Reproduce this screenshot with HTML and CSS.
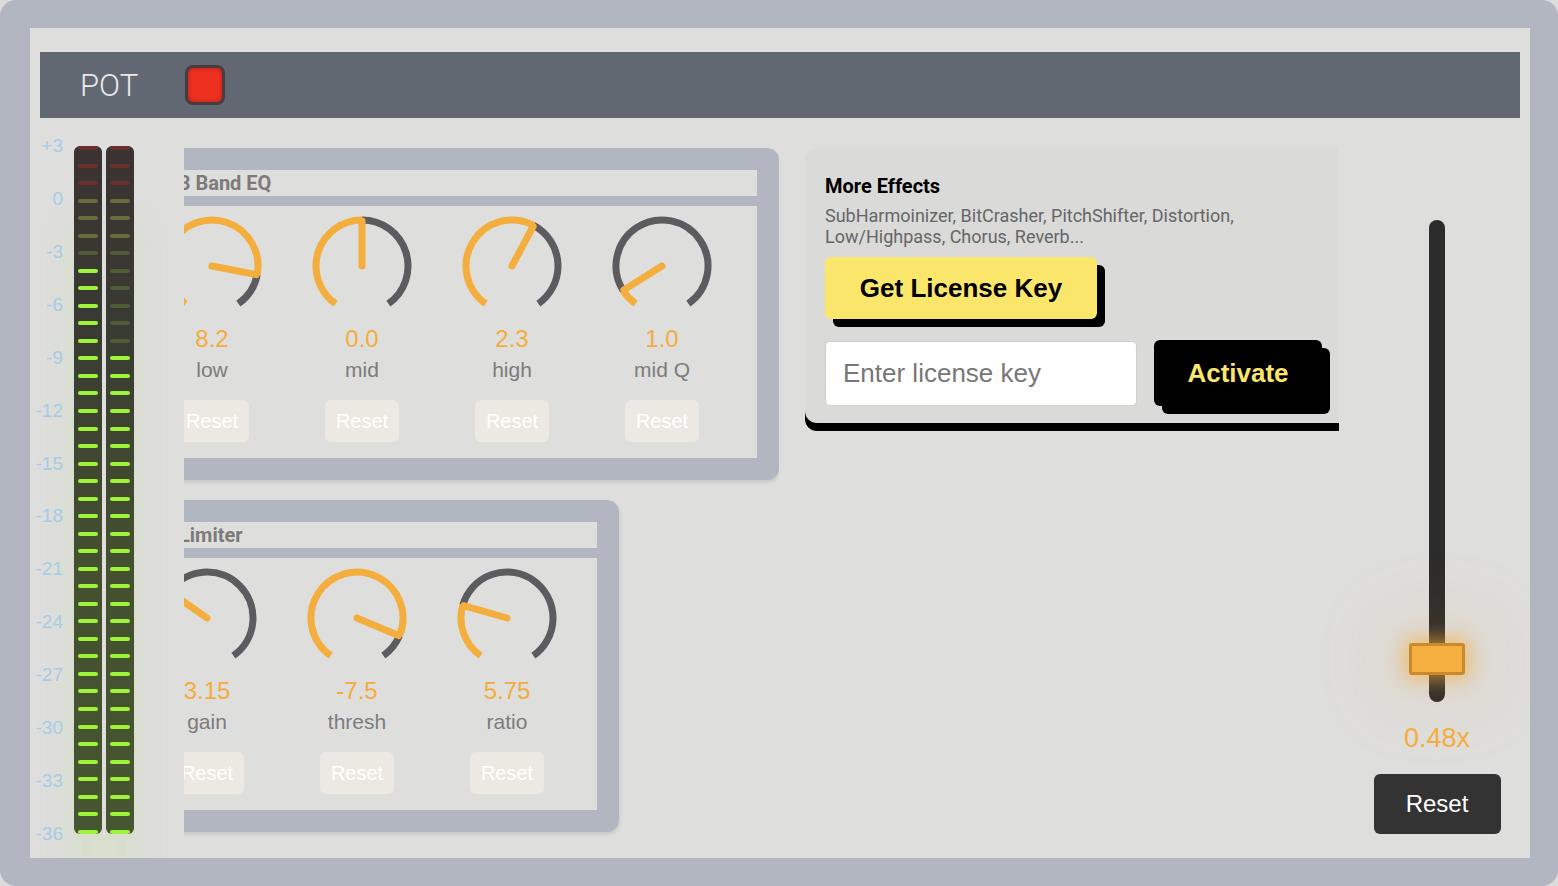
FILE: index.html
```html
<!DOCTYPE html>
<html>
<head>
    <link rel="stylesheet" href="styles.css">
</head>
<body>
    <div class="frame">
        <div class="inner">
            <div class="header">
                <span class="title">POT</span>
                <div class="led"></div>
            </div>

            <div class="main">
                <!-- level meter -->
                <div class="meter">
                    <div class="scale">
                        <span>+3</span><span>0</span><span>-3</span><span>-6</span><span>-9</span><span>-12</span><span>-15</span>
                        <span>-18</span><span>-21</span><span>-24</span><span>-27</span><span>-30</span><span>-33</span><span>-36</span>
                    </div>
                    <div class="bars">
                        <div class="bar">
                            <i class="r"></i><i class="r"></i><i class="r"></i>
                            <i class="y"></i><i class="y"></i><i class="y"></i>
                            <i class="g"></i>
                            <i class="on"></i><i class="on"></i><i class="on"></i><i class="on"></i><i class="on"></i>
                            <i class="on"></i><i class="on"></i><i class="on"></i><i class="on"></i><i class="on"></i>
                            <i class="on"></i><i class="on"></i><i class="on"></i><i class="on"></i><i class="on"></i>
                            <i class="on"></i><i class="on"></i><i class="on"></i><i class="on"></i><i class="on"></i>
                            <i class="on"></i><i class="on"></i><i class="on"></i><i class="on"></i><i class="on"></i>
                            <i class="on"></i><i class="on"></i><i class="on"></i><i class="on"></i><i class="on"></i>
                            <i class="on"></i><i class="on"></i><i class="on"></i>
                        </div>
                        <div class="bar">
                            <i class="r"></i><i class="r"></i><i class="r"></i>
                            <i class="y"></i><i class="y"></i><i class="y"></i>
                            <i class="g"></i><i class="g"></i><i class="g"></i><i class="g"></i><i class="g"></i><i class="g"></i>
                            <i class="on"></i><i class="on"></i><i class="on"></i><i class="on"></i><i class="on"></i>
                            <i class="on"></i><i class="on"></i><i class="on"></i><i class="on"></i><i class="on"></i>
                            <i class="on"></i><i class="on"></i><i class="on"></i><i class="on"></i><i class="on"></i>
                            <i class="on"></i><i class="on"></i><i class="on"></i><i class="on"></i><i class="on"></i>
                            <i class="on"></i><i class="on"></i><i class="on"></i><i class="on"></i><i class="on"></i>
                            <i class="on"></i><i class="on"></i><i class="on"></i>
                        </div>
                    </div>
                </div>

                <!-- effect racks -->
                <div class="racks">
                    <div class="panel eq">
                        <div class="panel-title">3 Band EQ</div>
                        <div class="panel-body">
                            <div class="knob-col">
                                <svg class="knob" viewBox="0 0 100 100" width="100" height="100">
                                    <path class="track" d="M95.16 58.78 A46 46 0 0 1 76.38 87.68"/>
                                    <path class="fill" d="M23.62 87.68 A46 46 0 1 1 95.16 58.78"/>
                                    <line class="needle" x1="50" y1="50" x2="94.17" y2="58.59"/>
                                </svg>
                                <div class="value">8.2</div>
                                <div class="label">low</div>
                                <button class="reset">Reset</button>
                            </div>
                            <div class="knob-col">
                                <svg class="knob" viewBox="0 0 100 100" width="100" height="100">
                                    <path class="track" d="M50 4 A46 46 0 0 1 76.38 87.68"/>
                                    <path class="fill" d="M23.62 87.68 A46 46 0 0 1 50 4"/>
                                    <line class="needle" x1="50" y1="50" x2="50" y2="5"/>
                                </svg>
                                <div class="value">0.0</div>
                                <div class="label">mid</div>
                                <button class="reset">Reset</button>
                            </div>
                            <div class="knob-col">
                                <svg class="knob" viewBox="0 0 100 100" width="100" height="100">
                                    <path class="track" d="M71.60 9.39 A46 46 0 0 1 76.38 87.68"/>
                                    <path class="fill" d="M23.62 87.68 A46 46 0 0 1 71.60 9.39"/>
                                    <line class="needle" x1="50" y1="50" x2="71.13" y2="10.27"/>
                                </svg>
                                <div class="value">2.3</div>
                                <div class="label">high</div>
                                <button class="reset">Reset</button>
                            </div>
                            <div class="knob-col">
                                <svg class="knob" viewBox="0 0 100 100" width="100" height="100">
                                    <path class="track" d="M10.99 74.38 A46 46 0 1 1 76.38 87.68"/>
                                    <path class="fill" d="M23.62 87.68 A46 46 0 0 1 10.99 74.38"/>
                                    <line class="needle" x1="50" y1="50" x2="11.84" y2="73.85"/>
                                </svg>
                                <div class="value">1.0</div>
                                <div class="label">mid Q</div>
                                <button class="reset">Reset</button>
                            </div>
                        </div>
                    </div>

                    <div class="panel limiter">
                        <div class="panel-title">Limiter</div>
                        <div class="panel-body">
                            <div class="knob-col">
                                <svg class="knob" viewBox="0 0 100 100" width="100" height="100">
                                    <path class="track" d="M12.32 23.61 A46 46 0 1 1 76.38 87.68"/>
                                    <path class="fill" d="M23.62 87.68 A46 46 0 0 1 12.32 23.61"/>
                                    <line class="needle" x1="50" y1="50" x2="13.14" y2="24.19"/>
                                </svg>
                                <div class="value">3.15</div>
                                <div class="label">gain</div>
                                <button class="reset">Reset</button>
                            </div>
                            <div class="knob-col">
                                <svg class="knob" viewBox="0 0 100 100" width="100" height="100">
                                    <path class="track" d="M92.34 67.97 A46 46 0 0 1 76.38 87.68"/>
                                    <path class="fill" d="M23.62 87.68 A46 46 0 1 1 92.34 67.97"/>
                                    <line class="needle" x1="50" y1="50" x2="91.42" y2="67.58"/>
                                </svg>
                                <div class="value">-7.5</div>
                                <div class="label">thresh</div>
                                <button class="reset">Reset</button>
                            </div>
                            <div class="knob-col">
                                <svg class="knob" viewBox="0 0 100 100" width="100" height="100">
                                    <path class="track" d="M5.78 37.32 A46 46 0 1 1 76.38 87.68"/>
                                    <path class="fill" d="M23.62 87.68 A46 46 0 0 1 5.78 37.32"/>
                                    <line class="needle" x1="50" y1="50" x2="6.74" y2="37.60"/>
                                </svg>
                                <div class="value">5.75</div>
                                <div class="label">ratio</div>
                                <button class="reset">Reset</button>
                            </div>
                        </div>
                    </div>
                </div>

                <!-- license card -->
                <div class="shop">
                    <div class="card">
                        <h3>More Effects</h3>
                        <p class="desc">SubHarmoinizer, BitCrasher, PitchShifter, Distortion,<br>Low/Highpass, Chorus, Reverb...</p>
                        <button class="get-key">Get License Key</button>
                        <div class="key-row">
                            <input type="text" class="key-input" placeholder="Enter license key">
                            <button class="activate">Activate</button>
                        </div>
                    </div>
                </div>

                <!-- output gain slider -->
                <div class="slider-col">
                    <div class="track-v">
                        <div class="thumb"></div>
                    </div>
                    <div class="slider-value">0.48x</div>
                    <button class="reset-dark">Reset</button>
                </div>
            </div>
        </div>
    </div>
</body>
</html>
```

FILE: styles.css
```css
body {
    margin: 0;
    background-color: #dcdcdc;
    font-family: "Liberation Sans", Arial, sans-serif;
}
.frame {
    height: 886px;
    box-sizing: border-box;
    padding: 28px 28px 28px 30px;
    background-color: #b2b6c0;
    border-radius: 16px;
}
.inner {
    height: 830px;
    background-color: #dededc;
    display: flex;
    flex-direction: column;
    overflow: hidden;
}
.header {
    margin: 24px 10px 0;
    height: 66px;
    background-color: #626872;
    display: flex;
    align-items: center;
    padding-left: 40px;
    gap: 47px;
}
.header .title {
    font-family: Roboto, sans-serif;
    font-weight: 300;
    font-size: 31px;
    color: #e8e8ee;
}
.led {
    width: 40px;
    height: 40px;
    box-sizing: border-box;
    border: 3px solid #4a3b3e;
    border-radius: 8px;
    background-color: #ee3020;
    box-shadow: inset 0 0 4px #a8231a;
}
.main {
    display: flex;
    flex: 1;
}

/* meter */
.meter {
    width: 154px;
    display: flex;
    gap: 11px;
    padding-top: 18px;
    box-sizing: border-box;
}
.scale {
    width: 33px;
    height: 708px;
    display: flex;
    flex-direction: column;
    justify-content: space-between;
    text-align: right;
    line-height: 20px;
    font-size: 19px;
    color: #a7cbea;
}
.bars {
    margin-top: 10px;
    display: flex;
    gap: 4px;
    height: 688px;
    box-shadow: 0 80px 36px 4px rgba(160, 235, 70, 0.1);
    border-radius: 6px;
}
.bar {
    width: 28px;
    height: 688px;
    border-radius: 6px;
    overflow: hidden;
    display: flex;
    flex-direction: column;
    justify-content: space-between;
    align-items: center;
    background: linear-gradient(to bottom, #3a3331 0%, #393a33 25%, #44502f 60%, #465630 100%);
}
.bar i {
    display: block;
    width: 20px;
    height: 4px;
    border-radius: 2px;
}
.bar .r { background-color: #6b302c; }
.bar .y { background-color: #6b6a3a; }
.bar .g { background-color: #4e5c37; }
.bar .on { background-color: #9ef43a; }

/* racks */
.racks {
    width: 595px;
    margin-top: 30px;
    overflow: hidden;
    display: flex;
    flex-direction: column;
    align-items: flex-start;
    gap: 20px;
    padding-bottom: 6px;
    align-self: flex-start;
}
.panel {
    margin-left: -74px;
    background-color: #b2b6c0;
    padding: 22px;
    border-radius: 12px;
    display: flex;
    flex-direction: column;
    gap: 10px;
    box-shadow: 0 2px 4px rgba(0, 0, 0, 0.12);
}
.panel.eq { width: 625px; }
.panel.limiter { width: 465px; }
.panel-title {
    height: 26px;
    line-height: 26px;
    background-color: #dededc;
    padding-left: 47px;
    font-family: Roboto, sans-serif;
    font-weight: 700;
    font-size: 20px;
    color: #7b7b7b;
}
.panel-body {
    height: 252px;
    box-sizing: border-box;
    background-color: #dededc;
    display: flex;
    padding-top: 10px;
}
.eq .panel-body { padding-left: 5px; }
.knob-col {
    width: 150px;
    display: flex;
    flex-direction: column;
    align-items: center;
}
.knob {
    display: block;
}
.knob path, .knob line {
    fill: none;
    stroke-width: 7;
}
.knob .track { stroke: #5d5b5f; }
.knob .fill { stroke: #f4ae3e; }
.knob .needle {
    stroke: #f4ae3e;
    stroke-linecap: round;
}
.value {
    margin-top: 9px;
    font-size: 24px;
    line-height: 28px;
    color: #f4ac3c;
}
.label {
    margin-top: 5px;
    font-size: 21px;
    line-height: 24px;
    color: #7c7c7c;
}
.reset {
    margin-top: 18px;
    height: 42px;
    padding: 0 11px;
    border: none;
    border-radius: 6px;
    background-color: #ebe9e1;
    color: #fff;
    font-family: "Liberation Sans", Arial, sans-serif;
    font-size: 20px;
}

/* license card */
.shop {
    margin-left: 26px;
    width: 534px;
    margin-top: 30px;
    overflow: hidden;
    padding-bottom: 8px;
    align-self: flex-start;
}
.card {
    width: 580px;
    box-sizing: border-box;
    background-color: #dadad9;
    border-radius: 12px;
    box-shadow: 0 8px 0 #000;
    padding: 27px 20px 17px;
}
.card h3 {
    margin: 0;
    font-family: Roboto, sans-serif;
    font-weight: 700;
    font-size: 20px;
    line-height: 22px;
    color: #000;
}
.desc {
    margin: 8px 0 10px;
    font-family: Roboto, sans-serif;
    font-size: 18px;
    line-height: 21px;
    color: #666;
}
.get-key {
    width: 272px;
    height: 62px;
    border: none;
    border-radius: 6px;
    background-color: #fbe66c;
    box-shadow: 8px 8px 0 #000;
    font-family: "Liberation Sans", Arial, sans-serif;
    font-weight: 700;
    font-size: 26px;
    color: #000;
}
.key-row {
    margin-top: 22px;
    display: flex;
    gap: 17px;
}
.key-input {
    width: 312px;
    height: 65px;
    box-sizing: border-box;
    border: 1px solid #cfcfcf;
    border-radius: 5px;
    padding: 0 17px;
    font-family: "Liberation Sans", Arial, sans-serif;
    font-size: 26px;
    background-color: #fff;
}
.key-input::placeholder {
    color: #777;
}
.activate {
    width: 168px;
    height: 66px;
    margin-top: -1px;
    border: none;
    border-radius: 6px;
    background-color: #000;
    box-shadow: 8px 8px 0 #000;
    color: #fbe66c;
    font-family: "Liberation Sans", Arial, sans-serif;
    font-weight: 700;
    font-size: 26px;
}

/* slider */
.slider-col {
    margin-left: 5px;
    width: 186px;
    display: flex;
    flex-direction: column;
    align-items: center;
    padding-top: 102px;
}
.track-v {
    position: relative;
    width: 16px;
    height: 482px;
    border-radius: 8px;
    background-color: #2c2c2c;
}
.thumb {
    position: absolute;
    top: 423px;
    left: -20px;
    width: 56px;
    height: 32px;
    box-sizing: border-box;
    border: 3px solid #c98a2c;
    border-radius: 3px;
    background-color: #f5ae40;
    box-shadow: 0 0 18px 5px rgba(245, 170, 60, 0.6), 0 0 70px 30px rgba(245, 170, 60, 0.1);
}
.slider-value {
    margin-top: 21px;
    font-size: 27px;
    line-height: 30px;
    color: #f5ae40;
}
.reset-dark {
    margin-top: 21px;
    width: 127px;
    height: 60px;
    border: none;
    border-radius: 6px;
    background-color: #333;
    color: #fff;
    font-family: "Liberation Sans", Arial, sans-serif;
    font-size: 24px;
}
```
